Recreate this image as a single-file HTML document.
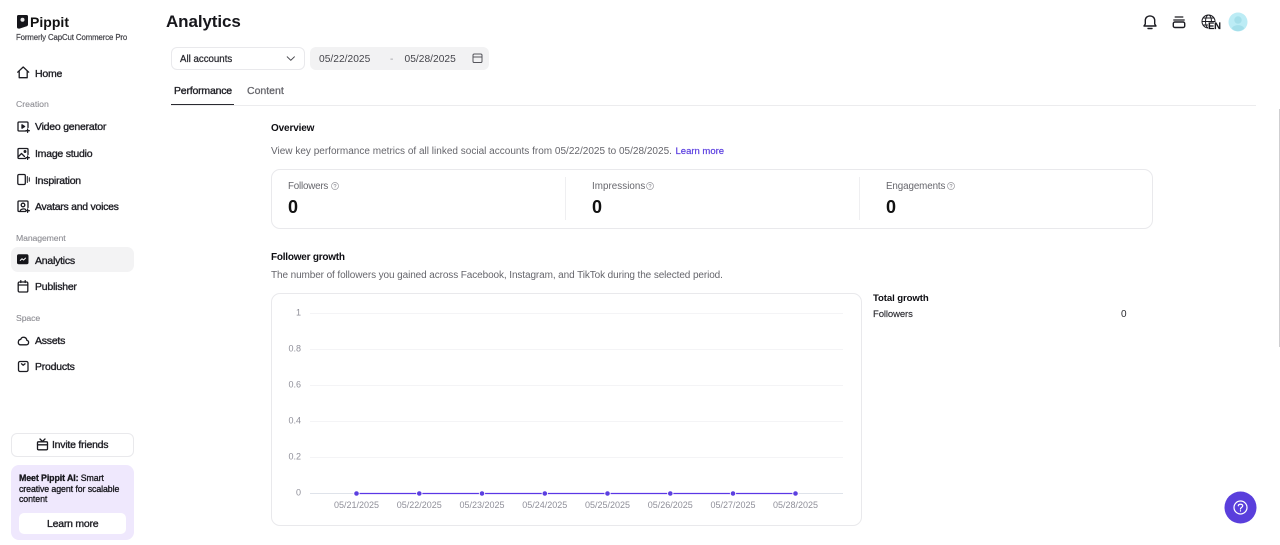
<!DOCTYPE html>
<html><head><meta charset="utf-8"><style>
html,body{margin:0;padding:0;background:#fff}
body{width:1280px;height:545px;overflow:hidden;position:relative;font-family:"Liberation Sans",sans-serif;color:#1a1a1f}
.t{position:absolute;white-space:nowrap;line-height:14px}
.n{font-size:10.5px;letter-spacing:-.23px;-webkit-text-stroke:.35px #1f1f25;color:#1f1f25;left:35px}
.h{font-size:8.7px;color:#8d8d93;left:16px;-webkit-text-stroke:.1px #8d8d93}
.g{font-size:10px;color:#66666c}
.b{font-weight:bold;font-size:10px;color:#0d0d12}
.box{position:absolute;box-sizing:border-box}
svg{position:absolute;overflow:visible}
.i{fill:none;stroke:#1c1c22;stroke-width:1.3;stroke-linecap:round;stroke-linejoin:round}
.ax{font-size:9px;color:#8f8f99;fill:#8f8f99}
</style></head><body>

<!-- Sidebar -->
<svg style="left:17px;top:15px" width="11" height="14" viewBox="0 0 11 14"><path d="M1.500 0H9.500Q11 0 11 1.500V9.500Q11 11 9 11.500L2.500 13.600Q0 14 0 12V1.500Q0 0 1.500 0Z" fill="#15151a"/><circle cx="5.500" cy="4.800" r="2" fill="#e8e8e8"/></svg>
<div class="t" style="left:30px;top:15px;font-size:14px;font-weight:bold;color:#111;letter-spacing:.02px">Pippit</div>
<div class="t" style="left:16px;top:31px;font-size:7.800px;color:#44444a;-webkit-text-stroke:.2px #44444a;letter-spacing:-.1px">Formerly CapCut Commerce Pro</div>

<svg class="i" style="left:17px;top:66px" width="13" height="13" viewBox="0 0 13 13"><path d="M.7 6.200 6.200 1 11.700 6.200M2.200 5.200V11.700H10.200V5.200"/></svg>
<div class="t n" style="top:66.500px">Home</div>
<div class="t h" style="top:97px">Creation</div>

<svg class="i" style="left:17px;top:120px" width="13" height="13" viewBox="0 0 13 13"><path d="M9 11H2Q1 11 1 10V3Q1 2 2 2H10Q11 2 11 3V7.500"/><path d="M5 4.800 7.600 6.500 5 8.200Z" fill="#1c1c22"/><path d="M10.600 9V12.400M9 10.700H12.300"/></svg>
<div class="t n" style="top:120px">Video generator</div>

<svg class="i" style="left:17px;top:147px" width="13" height="13" viewBox="0 0 13 13"><path d="M8.500 11.500H2Q1 11.500 1 10.500V2.500Q1 1.500 2 1.500H10Q11 1.500 11 2.500V7.500"/><path d="M1.500 9.500 4.500 6.500 7.500 9.500"/><circle cx="8" cy="4.500" r=".8"/><path d="M10.600 9V12.400M9 10.700H12.300"/></svg>
<div class="t n" style="top:147px">Image studio</div>

<svg class="i" style="left:17px;top:173px" width="13" height="13" viewBox="0 0 13 13"><rect x=".8" y="1.500" width="7.500" height="10" rx="1.200"/><path d="M10.300 3.500V9.500M12.300 4.800V8.200" stroke-width="1"/></svg>
<div class="t n" style="top:174px">Inspiration</div>

<svg class="i" style="left:17px;top:200px" width="13" height="13" viewBox="0 0 13 13"><path d="M8.500 11.500H2Q1 11.500 1 10.500V2Q1 1 2 1H10Q11 1 11 2V7.500"/><circle cx="6" cy="5" r="1.800"/><path d="M3.300 11C3.500 8.800 8 8.300 8.700 9.800"/><path d="M10.600 9V12.400M9 10.700H12.300"/></svg>
<div class="t n" style="top:200px;letter-spacing:-.27px">Avatars and voices</div>

<div class="t h" style="top:231px;letter-spacing:-.12px">Management</div>
<div class="box" style="left:11px;top:247px;width:123px;height:25px;background:#f3f3f4;border-radius:7px"></div>
<svg style="left:17px;top:254px" width="12" height="11" viewBox="0 0 12 11"><rect width="11.500" height="10" y=".3" rx="1.800" fill="#15151a"/><path d="M3 6.600 5 4.800 6.600 6 8.800 3.800" fill="none" stroke="#fff" stroke-width="1"/></svg>
<div class="t n" style="top:254px">Analytics</div>

<svg class="i" style="left:17px;top:280px" width="13" height="13" viewBox="0 0 13 13"><rect x="1.200" y="2" width="9.600" height="10" rx="1.300"/><path d="M1.200 5H10.800M3.800 .7V2.500M8.200 .7V2.500"/></svg>
<div class="t n" style="top:280px">Publisher</div>

<div class="t h" style="top:311px;letter-spacing:-.1px">Space</div>
<svg class="i" style="left:17px;top:334px" width="13" height="13" viewBox="0 0 13 13"><path d="M3.300 10.800H9.300C12 10.800 12.500 7 9.800 6.300 9.500 2.800 4.800 2.200 3.800 5.300 .6 5.700 .5 10.800 3.300 10.800Z"/></svg>
<div class="t n" style="top:334px">Assets</div>

<svg class="i" style="left:17px;top:360px" width="13" height="13" viewBox="0 0 13 13"><rect x="1.500" y="1.500" width="9.500" height="10" rx="1.500"/><path d="M4.500 3.800 6.200 5.200 8 3.800"/></svg>
<div class="t n" style="top:360px">Products</div>

<div class="box" style="left:11px;top:433px;width:123px;height:24px;border:1px solid #e9e9ec;border-radius:6px"></div>
<svg class="i" style="left:36px;top:438px" width="13" height="13" viewBox="0 0 13 13"><rect x="1.500" y="3.800" width="10" height="8" rx="1"/><path d="M1.500 6.800H11.500M4 1 6.500 3.500 9 1"/></svg>
<div class="t n" style="left:52px;top:438px">Invite friends</div>

<div class="box" style="left:11px;top:465px;width:123px;height:75px;background:#efe8fd;border-radius:8px"></div>
<div class="t" style="left:19px;top:473px;font-size:8.800px;line-height:10.700px;color:#17171d;-webkit-text-stroke:.3px #17171d;letter-spacing:-.09px"><b>Meet Pippit AI:</b> Smart<br>creative agent for scalable<br>content</div>
<div class="box" style="left:19px;top:513px;width:107px;height:21px;background:#fff;border-radius:5px"></div>
<div class="t n" style="left:47px;top:517px">Learn more</div>

<!-- Header -->
<div class="t" style="left:166px;top:12px;font-size:17px;line-height:20px;font-weight:bold;color:#17171c;letter-spacing:-.1px">Analytics</div>

<svg class="i" style="left:1142px;top:14px" width="16" height="16" viewBox="0 0 16 16"><path d="M2 12H14L12.700 10V6.500C12.700 .4 3.300 .4 3.300 6.500V10ZM6 14.500H10" stroke-width="1.400"/></svg>
<svg class="i" style="left:1172px;top:15px" width="14" height="14" viewBox="0 0 14 14"><path d="M3.200 2H10.800M1.800 5H12.200" stroke-width="1.300"/><rect x="1.300" y="7" width="11.400" height="5.500" rx="1.500" stroke-width="1.400"/></svg>
<svg class="i" style="left:1201px;top:14px;stroke-width:1" width="16" height="16" viewBox="0 0 16 16"><circle cx="7.500" cy="7.500" r="6.500"/><ellipse cx="7.500" cy="7.500" rx="3" ry="6.500"/><path d="M1 7.500H14M2 4H13M2 11H8"/></svg>
<div class="t" style="left:1208px;top:21.500px;font-size:9.500px;font-weight:bold;color:#15151a;background:#fff;line-height:10px;letter-spacing:-.2px;-webkit-text-stroke:.2px #15151a">EN</div>
<svg style="left:1228px;top:12px" width="20" height="20" viewBox="0 0 20 20"><circle cx="10" cy="10" r="9.500" fill="#bcecf5"/><circle cx="10" cy="8" r="3.700" fill="#a5dfea"/><path d="M3.800 16.500C5 12 15 12 16.200 16.500 12.500 20 7 20 3.800 16.500Z" fill="#a5dfea"/></svg>

<div class="box" style="left:171px;top:47px;width:134px;height:23px;border:1px solid #e9e9ec;border-radius:6px"></div>
<div class="t" style="left:180px;top:53px;font-size:9.700px;line-height:13px;color:#2b2b31;-webkit-text-stroke:.25px #2b2b31">All accounts</div>
<svg class="i" style="left:286px;top:55px;stroke-width:1;stroke:#44444a" width="10" height="8" viewBox="0 0 10 8"><path d="M1.200 1.800 4.800 5.300 8.400 1.800"/></svg>
<div class="box" style="left:310px;top:47px;width:179px;height:23px;background:#f2f2f3;border-radius:6px"></div>
<div class="t" style="left:319px;top:53px;font-size:10.200px;line-height:13px;color:#45454b;letter-spacing:.03px">05/22/2025</div>
<div class="t" style="left:390px;top:53px;font-size:10px;line-height:13px;color:#9a9aa0">-</div>
<div class="t" style="left:404.500px;top:53px;font-size:10.200px;line-height:13px;color:#45454b;letter-spacing:.03px">05/28/2025</div>
<svg class="i" style="left:472px;top:52.500px;stroke:#55555b;stroke-width:1" width="11" height="11" viewBox="0 0 11 11"><rect x="1" y="1" width="9" height="8.500" rx="1.300"/><path d="M1 4H10"/></svg>

<div class="t n" style="left:174px;top:84px;letter-spacing:-.2px">Performance</div>
<div class="t" style="left:247px;top:84px;font-size:10.500px;color:#66666c;-webkit-text-stroke:.3px #66666c">Content</div>
<div class="box" style="left:171px;top:105px;width:1085px;height:1px;background:#ececee"></div>
<div class="box" style="left:171px;top:103.500px;width:63px;height:1.500px;background:#2a2a30"></div>

<!-- Overview -->
<div class="t b" style="left:271px;top:122px;letter-spacing:-.15px">Overview</div>
<div class="t g" style="left:271px;top:145px;letter-spacing:.01px">View key performance metrics of all linked social accounts from 05/22/2025 to 05/28/2025.</div>
<div class="t" style="left:675.500px;top:145px;font-size:9.500px;color:#5b3fe0;-webkit-text-stroke:.2px #5b3fe0">Learn more</div>

<div class="box" style="left:271px;top:169px;width:882px;height:60px;border:1px solid #e9e9ec;border-radius:9px"></div>
<div class="t g" style="left:288px;top:180px;font-size:9.800px;letter-spacing:-.2px">Followers</div>
<svg class="i" style="left:331px;top:182px;stroke:#9a9aa0;stroke-width:.7" width="8" height="8" viewBox="0 0 8 8"><circle cx="4" cy="4" r="3.500"/><path d="M2.900 3.200C3 2 5.200 2.100 5.100 3.300 5 4 4 4 4 4.900M4 5.900V6"/></svg>
<div class="t" style="left:288px;top:198px;font-size:18px;line-height:18px;font-weight:bold;color:#111">0</div>
<div class="box" style="left:565px;top:177px;width:1px;height:43px;background:#efeff1"></div>
<div class="t g" style="left:592px;top:180px;font-size:9.800px;letter-spacing:.05px">Impressions</div>
<svg class="i" style="left:646px;top:182px;stroke:#9a9aa0;stroke-width:.7" width="8" height="8" viewBox="0 0 8 8"><circle cx="4" cy="4" r="3.500"/><path d="M2.900 3.200C3 2 5.200 2.100 5.100 3.300 5 4 4 4 4 4.900M4 5.900V6"/></svg>
<div class="t" style="left:592px;top:198px;font-size:18px;line-height:18px;font-weight:bold;color:#111">0</div>
<div class="box" style="left:859px;top:177px;width:1px;height:43px;background:#efeff1"></div>
<div class="t g" style="left:886px;top:180px;font-size:9.800px;letter-spacing:-.1px">Engagements</div>
<svg class="i" style="left:947px;top:182px;stroke:#9a9aa0;stroke-width:.7" width="8" height="8" viewBox="0 0 8 8"><circle cx="4" cy="4" r="3.500"/><path d="M2.900 3.200C3 2 5.200 2.100 5.100 3.300 5 4 4 4 4 4.900M4 5.900V6"/></svg>
<div class="t" style="left:886px;top:198px;font-size:18px;line-height:18px;font-weight:bold;color:#111">0</div>

<!-- Follower growth -->
<div class="t b" style="left:271px;top:251px;letter-spacing:-.23px">Follower growth</div>
<div class="t g" style="left:271px;top:269px;letter-spacing:-.1px">The number of followers you gained across Facebook, Instagram, and TikTok during the selected period.</div>

<div class="box" style="left:271px;top:293px;width:591px;height:233px;border:1px solid #e9e9ec;border-radius:9px"></div>
<svg style="left:0;top:0" width="1280" height="545" viewBox="0 0 1280 545">
<g stroke="#f4f4f6" stroke-width="1">
<path d="M310 313.500H843M310 349.500H843M310 385.500H843M310 421.500H843M310 457.500H843"/></g>
<path d="M310 493.500H843" stroke="#dfe3ea" stroke-width="1"/>
<path d="M356 493.500H796" stroke="#5b37e6" stroke-width="1.200"/>
<g fill="#5b3fe0" stroke="#fff" stroke-width=".8">
<circle cx="356.500" cy="493.500" r="2.700"/><circle cx="419.300" cy="493.500" r="2.700"/><circle cx="482" cy="493.500" r="2.700"/><circle cx="544.800" cy="493.500" r="2.700"/><circle cx="607.500" cy="493.500" r="2.700"/><circle cx="670.300" cy="493.500" r="2.700"/><circle cx="733" cy="493.500" r="2.700"/><circle cx="795.500" cy="493.500" r="2.700"/></g>
<g class="ax" text-anchor="end" style="font-family:'Liberation Sans',sans-serif;font-size:9px">
<text x="301" y="315.500">1</text><text x="301" y="351.500">0.8</text><text x="301" y="387.500">0.6</text><text x="301" y="423.500">0.4</text><text x="301" y="459.500">0.2</text><text x="301" y="495.500">0</text></g>
<g class="ax" text-anchor="middle" style="font-family:'Liberation Sans',sans-serif;font-size:9px">
<text x="356.500" y="508">05/21/2025</text><text x="419.300" y="508">05/22/2025</text><text x="482" y="508">05/23/2025</text><text x="544.800" y="508">05/24/2025</text><text x="607.500" y="508">05/25/2025</text><text x="670.300" y="508">05/26/2025</text><text x="733" y="508">05/27/2025</text><text x="795.500" y="508">05/28/2025</text></g>
</svg>

<div class="t b" style="left:873px;top:292px;font-size:9.600px;letter-spacing:-.1px">Total growth</div>
<div class="t" style="left:873px;top:308px;font-size:9.500px;color:#2b2b31;letter-spacing:-.1px;-webkit-text-stroke:.15px #2b2b31">Followers</div>
<div class="t" style="left:1121px;top:308px;font-size:10px;color:#2b2b31">0</div>

<!-- Help button -->
<svg style="left:1224px;top:491px" width="33" height="33" viewBox="0 0 33 33"><circle cx="16.500" cy="16.500" r="16" fill="#5a3fdc"/><circle cx="16.500" cy="16.500" r="6.500" fill="none" stroke="#fff" stroke-width="1.200"/><path d="M14.300 14.800C14.500 12.600 18.800 12.800 18.700 15 18.600 16.400 16.500 16.300 16.500 18M16.500 19.700V20" fill="none" stroke="#fff" stroke-width="1.200" stroke-linecap="round"/></svg>

<!-- Scrollbar -->
<div class="box" style="left:1279px;top:109px;width:1px;height:238px;background:#cfcfd1"></div>
</body></html>
